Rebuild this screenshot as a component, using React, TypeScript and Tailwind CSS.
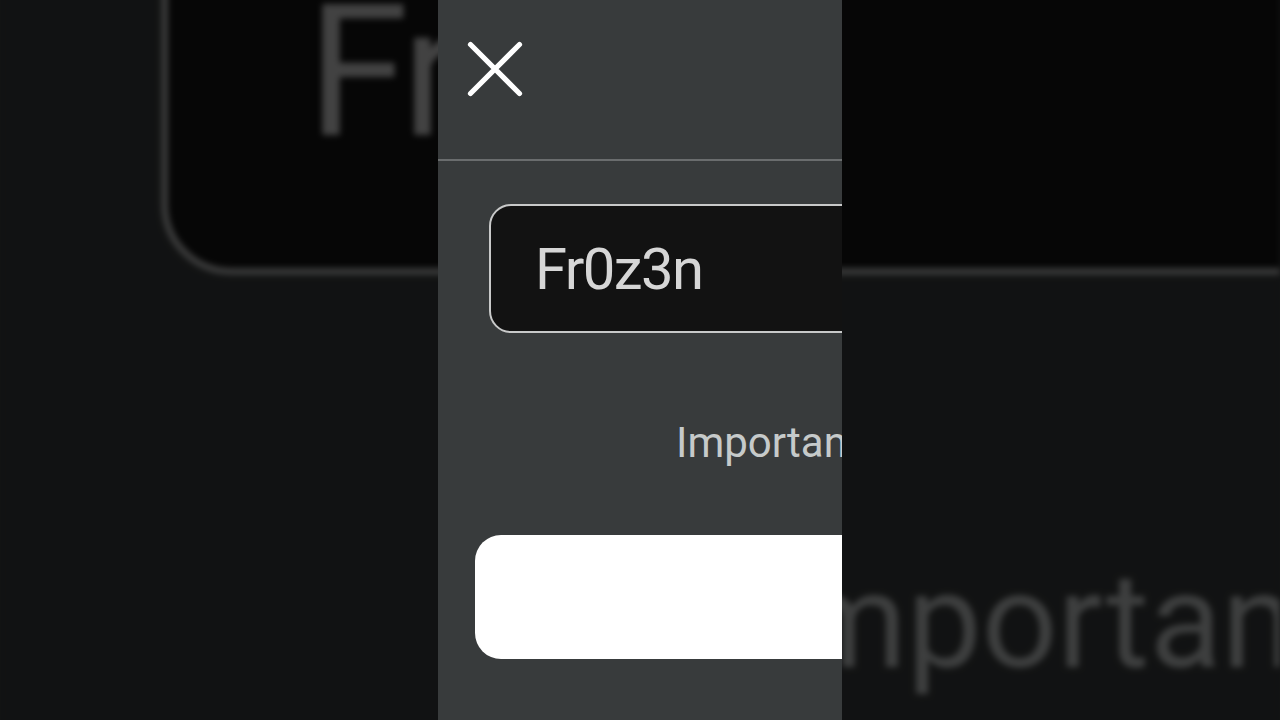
import React from "react";

function Panel() {
  return (
    <div
      className="flex h-[720px] w-[404px] shrink-0 flex-col overflow-hidden bg-[#383b3c]"
      style={{ fontFamily: "Roboto, 'Noto Sans', sans-serif" }}
    >
      <div className="h-[159px] pl-[29px] pt-[41px]">
        <svg width="56" height="56" viewBox="0 0 56 56" fill="none">
          <path
            d="M3.5 3.5 L52.5 52.5 M52.5 3.5 L3.5 52.5"
            stroke="#ffffff"
            strokeWidth="5.2"
            strokeLinecap="round"
          />
        </svg>
      </div>
      <div className="h-[2px] w-full bg-[#6a6d6e]" />
      <div className="ml-[51px] mt-[43px] flex h-[129px] w-[700px] shrink-0 items-center rounded-[22px] border-2 border-[#c8c9c9] bg-[#121212] pl-[44px]">
        <span className="whitespace-nowrap text-[58px] font-normal leading-none tracking-[-1.6px] text-[#d6d6d6]">
          Fr0z3n
        </span>
      </div>
      <div className="mt-[89px] whitespace-nowrap pl-[238px] text-[42px] leading-none text-[#c6caca]">
        Important
      </div>
      <div className="ml-[37px] mt-[71px] h-[124px] w-[700px] shrink-0 rounded-[26px] bg-white" />
    </div>
  );
}

export default function App() {
  return (
    <div className="relative h-[720px] w-[1280px] overflow-hidden bg-[#121313]">
      <div
        aria-hidden
        className="pointer-events-none absolute inset-0 flex items-center justify-center blur-[3px] brightness-[0.31]"
      >
        <div className="shrink-0 scale-[3.168]">
          <Panel />
        </div>
      </div>
      <div className="relative flex h-full justify-center">
        <Panel />
      </div>
    </div>
  );
}
